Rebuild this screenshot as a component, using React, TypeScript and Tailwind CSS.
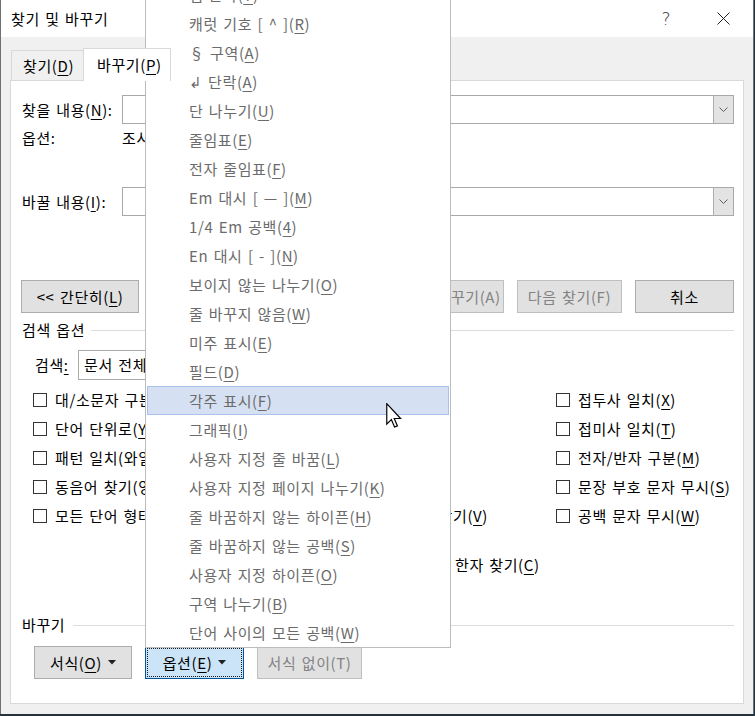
import React from "react";

const MENU = [
  "탭 문자(T)",
  "캐럿 기호 [ ^ ](R)",
  "§ 구역(A)",
  "↲ 단락(A)",
  "단 나누기(U)",
  "줄임표(E)",
  "전자 줄임표(F)",
  "Em 대시 [ — ](M)",
  "1/4 Em 공백(4)",
  "En 대시 [ - ](N)",
  "보이지 않는 나누기(O)",
  "줄 바꾸지 않음(W)",
  "미주 표시(E)",
  "필드(D)",
  "각주 표시(F)",
  "그래픽(I)",
  "사용자 지정 줄 바꿈(L)",
  "사용자 지정 페이지 나누기(K)",
  "줄 바꿈하지 않는 하이픈(H)",
  "줄 바꿈하지 않는 공백(S)",
  "사용자 지정 하이픈(O)",
  "구역 나누기(B)",
  "단어 사이의 모든 공백(W)",
];

function Mn({ text, under = true }: { text: string; under?: boolean }) {
  const m = text.match(/^(.*)\(([^()])\)(.*)$/);
  if (!m || !under) return <>{text}</>;
  return (
    <>
      {m[1]}(<span className="underline underline-offset-[3px]">{m[2]}</span>){m[3]}
    </>
  );
}

function Chevron() {
  return (
    <svg width="9" height="5" viewBox="0 0 9 5" fill="none">
      <path d="M0.5 0.5 L4.5 4.5 L8.5 0.5" stroke="#606060" strokeWidth="1" />
    </svg>
  );
}

function Combo({ text = "" }: { text?: string }) {
  return (
    <div className="flex-1 h-[29px] border border-[#a9a9a9] bg-white flex items-stretch">
      <div className="flex-1 flex items-center pl-[5px]">{text}</div>
      <div className="w-[20px] bg-[#e3e3e3] border-l border-[#adadad] flex items-center justify-center">
        <Chevron />
      </div>
    </div>
  );
}

function Btn({
  label,
  w,
  disabled = false,
  under = true,
}: {
  label: string;
  w: string;
  disabled?: boolean;
  under?: boolean;
}) {
  return (
    <div
      className={`${w} h-[33px] shrink-0 flex items-center justify-center bg-[#e1e1e1] border ${
        disabled ? "border-[#bfbfbf] text-[#838383]" : "border-[#adadad] text-black"
      }`}
    >
      <span className="whitespace-nowrap">
        <Mn text={label} under={under && !disabled} />
      </span>
    </div>
  );
}

function Check({ label }: { label: string }) {
  return (
    <div className="flex items-center h-[29px] gap-[8px]">
      <span className="w-[14px] h-[14px] border border-[#333333] bg-white shrink-0" />
      <span className="whitespace-nowrap">
        <Mn text={label} />
      </span>
    </div>
  );
}

function Caret() {
  return (
    <svg width="8" height="5" viewBox="0 0 8 5" className="ml-[6px]">
      <path d="M0 0 L8 0 L4 4.5 Z" fill="#202020" />
    </svg>
  );
}

function TitleBar() {
  return (
    <div className="h-[37px] bg-white flex items-center pl-[10px] shrink-0">
      <span className="text-[15px] text-black">찾기 및 바꾸기</span>
      <span className="ml-auto mr-[46px] text-[17px] text-[#333] font-['DejaVu_Sans',sans-serif] font-light">?</span>
      <svg width="13" height="13" viewBox="0 0 13 13" className="mr-[23px]">
        <path d="M0.5 0.5 L12.5 12.5 M12.5 0.5 L0.5 12.5" stroke="#222" strokeWidth="1" />
      </svg>
    </div>
  );
}

function Tabs() {
  return (
    <div className="h-[43px] flex items-end pl-[10px] shrink-0">
      <div className="h-[30px] w-[72px] border-t border-l border-[#d9d9d9] bg-[#f0f0f0] flex items-center pl-[11px]">
        <Mn text="찾기(D)" />
      </div>
      <div className="relative z-10 -mb-px h-[33px] w-[88px] bg-white border-t border-x border-[#d9d9d9] flex items-center pl-[13px]">
        <Mn text="바꾸기(P)" />
      </div>
      <div className="h-[30px] w-[64px] border-t border-r border-[#d9d9d9] flex items-center pl-[11px]">
        <Mn text="이동(G)" />
      </div>
    </div>
  );
}

function SectionLabel({ text, gap }: { text: string; gap: string }) {
  return (
    <div className="h-[20px] flex items-center">
      <span className="whitespace-nowrap">{text}</span>
      <div className={`${gap} flex-1 h-px bg-[#dcdcdc]`} />
    </div>
  );
}

function Panel() {
  return (
    <div className="mx-[9px] h-[624px] bg-white border border-[#d9d9d9] flex flex-col pl-[11px] pr-[9px] shrink-0">
      <div className="mt-[14px] flex items-center">
        <span className="w-[100px] whitespace-nowrap">
          <Mn text="찾을 내용(N):" />
        </span>
        <Combo />
      </div>
      <div className="mt-[4px] h-[20px] flex items-center">
        <span className="w-[100px]">옵션:</span>
        <span>조사 무시</span>
      </div>
      <div className="mt-[39px] flex items-center">
        <span className="w-[100px] whitespace-nowrap">
          <Mn text="바꿀 내용(I):" />
        </span>
        <Combo />
      </div>
      <div className="mt-[64px] -ml-px flex items-center">
        <Btn label="<< 간단히(L)" w="w-[118px]" />
        <div className="flex-1" />
        <div className="flex gap-[13px]">
          <Btn label="바꾸기(R)" w="w-[105px]" disabled />
          <Btn label="모두 바꾸기(A)" w="w-[105px]" disabled />
          <Btn label="다음 찾기(F)" w="w-[105px]" disabled />
          <Btn label="취소" w="w-[99px]" />
        </div>
      </div>
      <div className="mt-[7px]">
        <SectionLabel text="검색 옵션" gap="ml-[6px]" />
      </div>
      <div className="mt-[10px] pl-[13px] flex items-center">
        <span className="w-[43px]">
          검색<span className="underline underline-offset-[3px]">:</span>
        </span>
        <div className="w-[130px] h-[30px] border border-[#a9a9a9] bg-white flex items-center pl-[5px]">문서 전체</div>
      </div>
      <div className="mt-[5px] ml-[11px] grid grid-cols-[400px_123px_1fr]">
        <Check label="대/소문자 구분(H)" />
        <div />
        <Check label="접두사 일치(X)" />
        <Check label="단어 단위로(Y)" />
        <div />
        <Check label="접미사 일치(T)" />
        <Check label="패턴 일치(와일드카드 사용)(U)" />
        <div />
        <Check label="전자/반자 구분(M)" />
        <Check label="동음어 찾기(영어)(K)" />
        <div />
        <Check label="문장 부호 문자 무시(S)" />
        <div className="col-span-2 flex justify-between pr-[68px]">
          <Check label="모든 단어 형태 찾기(영어)(O)" />
          <Check label="한글 자모 찾기(V)" />
        </div>
        <Check label="공백 문자 무시(W)" />
        <div className="col-start-2 mt-[20px]">
          <Check label="한자 찾기(C)" />
        </div>
      </div>
      <div className="mt-[36px]">
        <SectionLabel text="바꾸기" gap="ml-[8px]" />
      </div>
      <div className="mt-[11px] ml-[12px] flex gap-[13px]">
        <div className="w-[98px] h-[33px] bg-[#e1e1e1] border border-[#adadad] flex items-center justify-center">
          <Mn text="서식(O)" />
          <Caret />
        </div>
        <div className="w-[99px] h-[33px] bg-[#cce4f7] border border-[#005499] p-px">
          <div className="w-full h-full border border-dotted border-[#1a1a1a] flex items-center justify-center">
            <Mn text="옵션(E)" />
            <Caret />
          </div>
        </div>
        <Btn label="서식 없이(T)" w="w-[105px]" disabled />
      </div>
    </div>
  );
}

function SpecialMenu() {
  return (
    <div className="absolute left-[145px] top-[-21px] w-[306px] bg-white border border-[#bcbcbc] flex flex-col text-[#6b6b6b]">
      {MENU.map((m, i) =>
        i === 14 ? (
          <div
            key={i}
            className="mx-px h-[29px] flex items-center pl-[41px] bg-[#d5e1f2] border border-[#a9c2ea] whitespace-nowrap"
          >
            <Mn text={m} />
          </div>
        ) : (
          <div key={i} className="mx-px h-[29px] flex items-center pl-[42px] whitespace-nowrap">
            <Mn text={m} />
          </div>
        )
      )}
    </div>
  );
}

function Cursor() {
  return (
    <svg width="16" height="25" viewBox="0 0 12 19" className="absolute left-[386px] top-[403px]">
      <path
        d="M0.5 0.5 L0.5 16 L4 12.6 L6.4 18.3 L8.6 17.4 L6.2 11.8 L11 11.8 Z"
        fill="white"
        stroke="black"
        strokeWidth="0.9"
        strokeLinejoin="miter"
      />
    </svg>
  );
}

export default function App() {
  return (
    <div className="relative w-[755px] h-[716px] overflow-hidden bg-[#24333d] font-['Noto_Sans_CJK_KR','Noto_Sans',sans-serif] text-[15px] leading-[20px] tracking-[0.6px] [word-spacing:1.5px] text-black">
      <div className="w-[754px] h-[714px] bg-[#f0f0f0] border-x border-[#6f6f6f] flex flex-col">
        <TitleBar />
        <Tabs />
        <Panel />
      </div>
      <SpecialMenu />
      <Cursor />
    </div>
  );
}
